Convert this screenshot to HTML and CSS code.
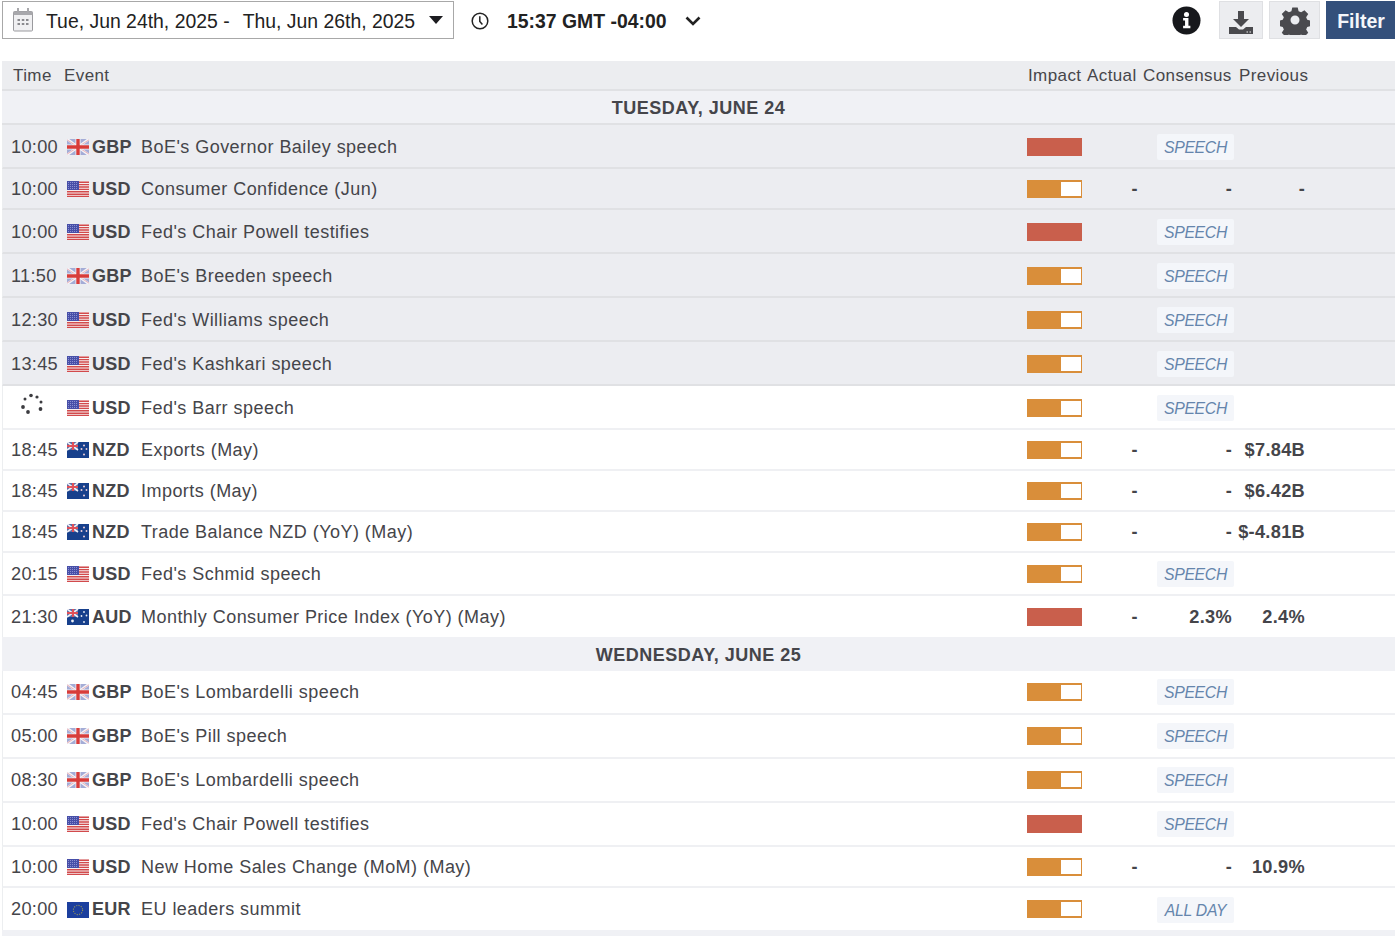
FILE: index.html
```html
<!DOCTYPE html>
<html lang="en">
<head>
<meta charset="utf-8">
<title>Economic Calendar</title>
<link rel="stylesheet" href="styles.css">
</head>
<body>
<svg class="defs" width="0" height="0" aria-hidden="true">
  <symbol id="gbp" viewBox="0 0 22 16">
    <rect width="22" height="16" fill="#a4acd6"/>
    <path d="M0 0l22 16M22 0L0 16" stroke="#f4f4f8" stroke-width="2.600"/>
    <path d="M0 .8L22 15.200M22 .8L0 15.200" stroke="#e8a0a6" stroke-width=".8"/>
    <path d="M8.500 0h5v16h-5zM0 5.500h22v5H0z" fill="#f4f4f8"/>
    <path d="M9.300 0h3.400v16H9.300zM0 6.300h22v3.400H0z" fill="#d83c3a"/>
  </symbol>
  <symbol id="usd" viewBox="0 0 22 16">
    <rect width="22" height="16" fill="#f6eeee"/>
    <path d="M0 1.200h22M0 3.600h22M0 6h22M0 8.400h22M0 10.800h22M0 13.200h22M0 15.400h22" stroke="#d24a4c" stroke-width="1.400"/>
    <rect width="12" height="9" fill="#474fa8"/>
    <path d="M1 1.500h10M1 3.500h10M1 5.500h10M1 7.500h10" stroke="#9aa0dc" stroke-width=".8" stroke-dasharray="1 1"/>
  </symbol>
  <symbol id="nzd" viewBox="0 0 22 16">
    <rect width="22" height="16" fill="#17408c"/>
    <rect width="11" height="8" fill="#5d6fa8"/>
    <path d="M0 0l11 8M11 0L0 8" stroke="#eef0f6" stroke-width="1.600"/>
    <path d="M5 0h2v8H5zM0 3h11v2H0z" fill="#e05058"/>
    <circle cx="17" cy="3.500" r="1" fill="#f0d0d8"/><circle cx="14.500" cy="7" r="1" fill="#f0d0d8"/><circle cx="19.500" cy="7" r=".9" fill="#f0d0d8"/><circle cx="17" cy="12.500" r="1" fill="#f0d0d8"/>
  </symbol>
  <symbol id="aud" viewBox="0 0 22 16">
    <rect width="22" height="16" fill="#17408c"/>
    <rect width="11" height="8" fill="#5d6fa8"/>
    <path d="M0 0l11 8M11 0L0 8" stroke="#eef0f6" stroke-width="1.600"/>
    <path d="M5 0h2v8H5zM0 3h11v2H0z" fill="#e05058"/>
    <circle cx="5.500" cy="12" r="1.400" fill="#eef0f6"/><circle cx="17" cy="3" r=".9" fill="#eef0f6"/><circle cx="14.500" cy="7" r=".9" fill="#eef0f6"/><circle cx="19.500" cy="6.500" r=".9" fill="#eef0f6"/><circle cx="17" cy="13" r=".9" fill="#eef0f6"/>
  </symbol>
  <symbol id="eur" viewBox="0 0 22 16">
    <rect width="22" height="16" fill="#1c3f9e"/>
    <circle cx="11" cy="8" r="4.600" fill="none" stroke="#8c8f5e" stroke-width="1.100" stroke-dasharray="1.200 1.200"/>
  </symbol>
</svg>
<div class="page">
  <header class="topbar">
    <div class="datebox">
      <svg class="cal" viewBox="0 0 20 24" width="20" height="24" aria-hidden="true">
        <path d="M1.500 3.500h17a1 1 0 0 1 1 1V22a1 1 0 0 1-1 1h-17a1 1 0 0 1-1-1V4.500a1 1 0 0 1 1-1z" fill="#f0f0f2" stroke="#9a9a9e"/>
        <path d="M.5 4.500a1 1 0 0 1 1-1h17a1 1 0 0 1 1 1V7H.5z" fill="#a8a8ac"/>
        <path d="M4 0h2v5H4zM14 0h2v5h-2z" fill="#a8a8ac"/>
        <path d="M4.500 11h2.500v2H4.500zM8.800 11h2.500v2H8.800zM13 11h2.500v2H13zM4.500 15h2.500v2H4.500zM8.800 15h2.500v2H8.800zM13 15h2.500v2H13z" fill="#8a8a8e"/>
      </svg>
      <span class="daterange">Tue, Jun 24th, 2025 -</span>
      <span class="daterange second">Thu, Jun 26th, 2025</span>
      <span class="caret"></span>
    </div>
    <svg class="clock" viewBox="0 0 18 18" width="18" height="18" aria-hidden="true">
      <circle cx="9" cy="9" r="7.800" fill="none" stroke="#222" stroke-width="1.500"/>
      <path d="M8.800 4.200V9.500l2.600 3" fill="none" stroke="#222" stroke-width="1.500"/>
    </svg>
    <span class="tz">15:37 GMT -04:00</span>
    <svg class="chev" viewBox="0 0 16 10" width="16" height="10" aria-hidden="true">
      <path d="M1.500 1.500L8 8l6.500-6.500" fill="none" stroke="#222" stroke-width="2.600"/>
    </svg>
    <span class="spacer"></span>
    <svg class="info" viewBox="0 0 30 30" width="29" height="29" aria-hidden="true">
      <circle cx="15" cy="15" r="14.500" fill="#17181c"/>
      <circle cx="15" cy="8.800" r="2.600" fill="#fff"/>
      <path d="M11.500 12.500h5.500v8h2v2.500h-7.500v-2.500h2v-5.500h-2z" fill="#fff"/>
    </svg>
    <div class="iconbtn dl">
      <svg viewBox="0 0 24 24" width="24" height="24" aria-hidden="true">
        <path d="M9 1h6v8h5l-8 8-8-8h5z" fill="#4a4a4e"/>
        <path d="M0 17h7l3 2.500h4l3-2.500h7v7H0z" fill="#4a4a4e"/>
        <path d="M17.500 21.500h1.500v1h-1.500zM20.500 21.500h1.500v1h-1.500z" fill="#eee"/>
      </svg>
    </div>
    <div class="iconbtn gear">
      <svg viewBox="0 0 30 30" width="30" height="30" aria-hidden="true">
        <path fill-rule="evenodd" fill="#4a4a4e" d="M12 1h6l1 4.200 2.800 1.200 3.700-2.300 4.200 4.200-2.300 3.700 1.200 2.800 4.200 1v6l-4.200 1-1.200 2.800 2.300 3.700-4.200 4.200-3.700-2.300-2.800 1.200-1 4.200h-6l-1-4.200-2.800-1.200-3.700 2.300-4.200-4.200 2.300-3.700-1.200-2.800-4.200-1v-6l4.200-1 1.200-2.800-2.300-3.700 4.200-4.200 3.700 2.300 2.800-1.200zM15 10a5 5 0 1 0 0 10 5 5 0 0 0 0-10z" transform="translate(1.500 1.500) scale(.9)"/>
      </svg>
    </div>
    <div class="filter">Filter</div>
  </header>

  <main class="table">
    <div class="thead">
      <span class="h-time">Time</span>
      <span class="h-event">Event</span>
      <span class="h-impact">Impact</span>
      <span class="h-actual">Actual</span>
      <span class="h-cons">Consensus</span>
      <span class="h-prev">Previous</span>
    </div>
    <div class="day day-first">TUESDAY, JUNE 24</div>

    <div class="row past low"><span class="time">10:00</span><svg class="flag"><use href="#gbp"/></svg><b class="cur">GBP</b><span class="ev">BoE's Governor Bailey speech</span><span class="bar high"></span><span class="actual"></span><span class="cons"><em class="chip">SPEECH</em></span><span class="prev"></span></div>
    <div class="row past short"><span class="time">10:00</span><svg class="flag"><use href="#usd"/></svg><b class="cur">USD</b><span class="ev">Consumer Confidence (Jun)</span><span class="bar med"><i></i></span><span class="actual">-</span><span class="cons dash">-</span><span class="prev dash">-</span></div>
    <div class="row past low"><span class="time">10:00</span><svg class="flag"><use href="#usd"/></svg><b class="cur">USD</b><span class="ev">Fed's Chair Powell testifies</span><span class="bar high"></span><span class="actual"></span><span class="cons"><em class="chip">SPEECH</em></span><span class="prev"></span></div>
    <div class="row past low"><span class="time">11:50</span><svg class="flag"><use href="#gbp"/></svg><b class="cur">GBP</b><span class="ev">BoE's Breeden speech</span><span class="bar med"><i></i></span><span class="actual"></span><span class="cons"><em class="chip">SPEECH</em></span><span class="prev"></span></div>
    <div class="row past low"><span class="time">12:30</span><svg class="flag"><use href="#usd"/></svg><b class="cur">USD</b><span class="ev">Fed's Williams speech</span><span class="bar med"><i></i></span><span class="actual"></span><span class="cons"><em class="chip">SPEECH</em></span><span class="prev"></span></div>
    <div class="row past low"><span class="time">13:45</span><svg class="flag"><use href="#usd"/></svg><b class="cur">USD</b><span class="ev">Fed's Kashkari speech</span><span class="bar med"><i></i></span><span class="actual"></span><span class="cons"><em class="chip">SPEECH</em></span><span class="prev"></span></div>

    <div class="row low"><span class="time spin"><svg viewBox="0 0 24 24" width="24" height="24" aria-hidden="true"><g fill="#3c3c40"><circle cx="11" cy="2.500" r="1.800"/><circle cx="17" cy="4" r="1.600"/><circle cx="21" cy="9" r="1.500"/><circle cx="20.500" cy="16" r="1.900"/><circle cx="8" cy="19" r="1.900"/><circle cx="3" cy="14" r="1.900"/><circle cx="5" cy="6" r="1.500"/></g></svg></span><svg class="flag"><use href="#usd"/></svg><b class="cur">USD</b><span class="ev">Fed's Barr speech</span><span class="bar med"><i></i></span><span class="actual"></span><span class="cons"><em class="chip">SPEECH</em></span><span class="prev"></span></div>
    <div class="row short"><span class="time">18:45</span><svg class="flag"><use href="#nzd"/></svg><b class="cur">NZD</b><span class="ev">Exports (May)</span><span class="bar med"><i></i></span><span class="actual">-</span><span class="cons">-</span><span class="prev">$7.84B</span></div>
    <div class="row short"><span class="time">18:45</span><svg class="flag"><use href="#nzd"/></svg><b class="cur">NZD</b><span class="ev">Imports (May)</span><span class="bar med"><i></i></span><span class="actual">-</span><span class="cons">-</span><span class="prev">$6.42B</span></div>
    <div class="row short"><span class="time">18:45</span><svg class="flag"><use href="#nzd"/></svg><b class="cur">NZD</b><span class="ev">Trade Balance NZD (YoY) (May)</span><span class="bar med"><i></i></span><span class="actual">-</span><span class="cons">-</span><span class="prev">$-4.81B</span></div>
    <div class="row mid"><span class="time">20:15</span><svg class="flag"><use href="#usd"/></svg><b class="cur">USD</b><span class="ev">Fed's Schmid speech</span><span class="bar med"><i></i></span><span class="actual"></span><span class="cons"><em class="chip">SPEECH</em></span><span class="prev"></span></div>
    <div class="row short noline"><span class="time">21:30</span><svg class="flag"><use href="#aud"/></svg><b class="cur">AUD</b><span class="ev">Monthly Consumer Price Index (YoY) (May)</span><span class="bar high"></span><span class="actual">-</span><span class="cons">2.3%</span><span class="prev">2.4%</span></div>

    <div class="day day-second">WEDNESDAY, JUNE 25</div>

    <div class="row"><span class="time">04:45</span><svg class="flag"><use href="#gbp"/></svg><b class="cur">GBP</b><span class="ev">BoE's Lombardelli speech</span><span class="bar med"><i></i></span><span class="actual"></span><span class="cons"><em class="chip">SPEECH</em></span><span class="prev"></span></div>
    <div class="row"><span class="time">05:00</span><svg class="flag"><use href="#gbp"/></svg><b class="cur">GBP</b><span class="ev">BoE's Pill speech</span><span class="bar med"><i></i></span><span class="actual"></span><span class="cons"><em class="chip">SPEECH</em></span><span class="prev"></span></div>
    <div class="row"><span class="time">08:30</span><svg class="flag"><use href="#gbp"/></svg><b class="cur">GBP</b><span class="ev">BoE's Lombardelli speech</span><span class="bar med"><i></i></span><span class="actual"></span><span class="cons"><em class="chip">SPEECH</em></span><span class="prev"></span></div>
    <div class="row"><span class="time">10:00</span><svg class="flag"><use href="#usd"/></svg><b class="cur">USD</b><span class="ev">Fed's Chair Powell testifies</span><span class="bar high"></span><span class="actual"></span><span class="cons"><em class="chip">SPEECH</em></span><span class="prev"></span></div>
    <div class="row short"><span class="time">10:00</span><svg class="flag"><use href="#usd"/></svg><b class="cur">USD</b><span class="ev">New Home Sales Change (MoM) (May)</span><span class="bar med"><i></i></span><span class="actual">-</span><span class="cons">-</span><span class="prev">10.9%</span></div>
    <div class="row last noline"><span class="time">20:00</span><svg class="flag"><use href="#eur"/></svg><b class="cur">EUR</b><span class="ev">EU leaders summit</span><span class="bar med"><i></i></span><span class="actual"></span><span class="cons"><em class="chip">ALL DAY</em></span><span class="prev"></span></div>
    <div class="tail"></div>
  </main>
</div>
</body>
</html>
```
FILE: styles.css
```css
* { box-sizing: border-box; }
html, body { margin: 0; padding: 0; background: #fff; }
body { font-family: "Liberation Sans", Arial, sans-serif; color: #45454a; }
.defs { position: absolute; }
.page { width: 1400px; height: 936px; overflow: hidden; }

.topbar { display: flex; align-items: center; height: 38px; margin-top: 1px; padding-left: 2px; color: #222; }
.datebox { display: flex; align-items: center; width: 452px; height: 38px; border: 1px solid #a8a8a8; padding-left: 10px; }
.cal { flex: none; }
.daterange { font-size: 19.400px; margin-left: 13px; padding-top: 3px; white-space: nowrap; }
.second { margin-left: 13px; }
.caret { margin-left: 14px; border-left: 7.500px solid transparent; border-right: 7.500px solid transparent; border-top: 8px solid #1c1c20; }
.clock { margin-left: 17px; margin-top: 2px; flex: none; }
.tz { margin-left: 18px; padding-top: 3px; font-size: 19.400px; font-weight: 700; white-space: nowrap; }
.chev { margin-left: 18px; margin-top: 2px; flex: none; }
.spacer { flex: 1; }
.info { flex: none; }
.iconbtn { display: flex; align-items: center; justify-content: center; height: 38px; background: #ecedf0; border: 1px solid #dfe0e3; }
.dl { width: 44px; margin-left: 18px; padding-top: 3px; }
.gear { width: 51px; margin-left: 6px; }
.filter { display: flex; align-items: center; justify-content: center; width: 69px; height: 38px; margin-left: 6px; margin-right: 5px; padding: 3px 0 0 1px; background: #34507b; color: #f4f6fa; font-size: 19.500px; font-weight: 700; }

.table { margin: 22px 5px 0 2px; }
.thead { position: relative; height: 30px; background: #ecedf0; border-bottom: 2px solid #e0e1e4; font-size: 17px; letter-spacing: .4px; line-height: 29px; color: #46464a; display: flex; }
.thead span { white-space: nowrap; }
.h-time { margin-left: 11px; width: 51px; }
.h-event { width: 964px; }
.h-impact { width: 59px; }
.h-actual { width: 56px; }
.h-cons { width: 96px; }

.day { height: 34px; display: flex; align-items: center; justify-content: center; background: #f0f1f5; font-size: 18px; font-weight: 700; letter-spacing: .5px; color: #45454a; }
.day-first { border-bottom: 2px solid #e0e1e4; padding-top: 2px; }
.day-second { padding-top: 2px; }

.row { display: flex; align-items: center; height: 44px; background: #fff; border-bottom: 2px solid #eff0f3; border-left: 1px solid #eceef0; font-size: 18px; letter-spacing: .46px; white-space: nowrap; }
.row.low { padding-top: 2px; }
.row.short { height: 41px; padding-top: 1px; }
.row.mid { height: 43px; padding-top: 1px; }
.row.last { height: 42px; padding-top: 1px; }
.row.last .bar { margin-top: -1px; }
.row.past { background: #ecedf1; border-bottom-color: #e0e1e4; }
.row.noline { border-bottom: 0; }

.time { width: 64px; padding-left: 8px; font-size: 18.200px; letter-spacing: .3px; flex: none; }
.spin { height: 24px; padding-left: 17px; margin-top: -6px; }
.flag { width: 22px; height: 16px; flex: none; }
.cur { width: 52px; padding-left: 3px; font-size: 18px; font-weight: 700; letter-spacing: .2px; flex: none; }
.ev { width: 886px; flex: none; }
.bar { position: relative; width: 55px; height: 18px; flex: none; background: #c95f4c; }
.bar.med { background: #d98e3a; }
.bar.med i { position: absolute; right: 1px; top: 2px; width: 20px; height: 14px; background: #fff; }
.actual { width: 56px; text-align: right; font-weight: 700; flex: none; }
.cons { width: 94px; text-align: right; font-weight: 700; font-size: 18.200px; flex: none; letter-spacing: .3px; }
.prev { width: 73px; text-align: right; font-weight: 700; font-size: 18.200px; flex: none; letter-spacing: .3px; }
.actual:empty, .cons:empty, .prev:empty { visibility: hidden; }
.chip { display: inline-block; width: 77px; height: 26px; margin-right: -2px; line-height: 28px; text-align: center; background: #f4f6fa; color: #6585ac; font-size: 15.800px; font-weight: 400; font-style: italic; letter-spacing: -.3px; border-radius: 2px; }
.tail { height: 6px; background: #f0f1f5; }
```
